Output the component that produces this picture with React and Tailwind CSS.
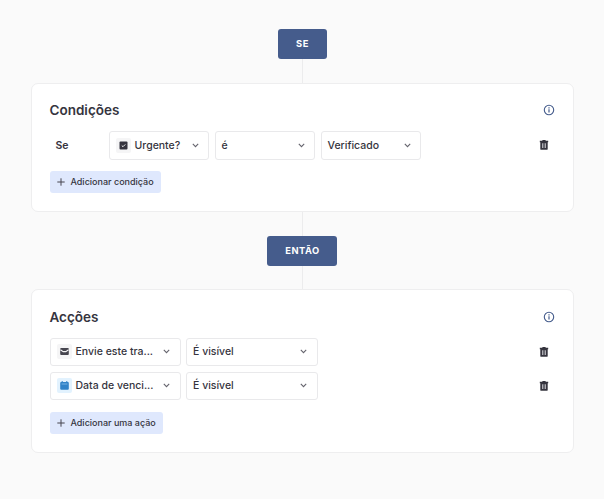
import { clsx } from 'clsx'

const FIELD_ICONS = {
    checkbox: { bg: 'bg-[#f5f5f6]', Glyph: CheckboxGlyph },
    mail: { bg: 'bg-[#f5f5f6]', Glyph: MailGlyph },
    calendar: { bg: 'bg-[#e2f2fe]', Glyph: CalendarGlyph },
}

const ACTIONS = [
    { id: 1, icon: 'mail', field: 'Envie este tra...', state: 'É visível' },
    { id: 2, icon: 'calendar', field: 'Data de venci...', state: 'É visível' },
]

function CheckboxGlyph() {
    return (
        <svg width="9" height="9" viewBox="0 0 9 9" fill="none">
            <rect x="0.5" y="0.5" width="8" height="8" rx="1" fill="#35343e" />
            <path d="M2.8 4.6L4 5.7L6.3 3.4" stroke="#fff" strokeWidth="0.9" />
        </svg>
    )
}

function MailGlyph() {
    return (
        <svg width="9" height="9" viewBox="0 0 9 9" fill="none">
            <rect x="0.2" y="1" width="8.6" height="7" rx="0.9" fill="#46454f" />
            <path d="M0.4 2.7L3.2 4.6H5.8L8.6 2.7" stroke="#f5f5f6" strokeWidth="1.1" />
        </svg>
    )
}

function CalendarGlyph() {
    return (
        <svg width="9" height="9" viewBox="0 0 9 9" fill="none">
            <path d="M2.2 0V2M6.8 0V2" stroke="#3183c8" strokeWidth="1" />
            <rect x="0.2" y="0.9" width="8.6" height="7.8" rx="1" fill="#3183c8" />
            <path d="M1.6 3H7.4" stroke="#8cc0e8" strokeWidth="0.8" />
        </svg>
    )
}

function Chevron() {
    return (
        <svg className="shrink-0" width="7" height="5" viewBox="0 0 7 5" fill="none">
            <path d="M0.8 0.9L3.5 3.6L6.2 0.9" stroke="#65646d" strokeWidth="1.1" />
        </svg>
    )
}

function Info() {
    return (
        <svg width="12" height="12" viewBox="0 0 12 12" fill="none" stroke="#455c8c">
            <circle cx="6" cy="6" r="4.7" strokeWidth="1.1" />
            <path d="M6 5.2V8.6M6 3.3V4.5" strokeWidth="1.2" />
        </svg>
    )
}

function Trash() {
    return (
        <svg width="10" height="10" viewBox="0 0 10 10" fill="none">
            <path d="M3.4 0H6.6V0.7H9.2V2.2H0.8V0.7H3.4Z" fill="#35343e" />
            <path d="M1.3 1.5H8.7V8.9Q8.7 9.8 7.8 9.8H2.2Q1.3 9.8 1.3 8.9Z" fill="#35343e" />
            <path d="M3.7 3.2V8.1M6.3 3.2V8.1" stroke="#c4c4c8" strokeWidth="1.1" />
            <path d="M5 3.2V8.1" stroke="#77767e" strokeWidth="1" />
        </svg>
    )
}

function Select({ icon, label, className }) {
    const field = FIELD_ICONS[icon]
    return (
        <button className={clsx('flex h-[28.5px] items-center rounded-[3px] border border-[#e9e9eb] bg-white pl-[6px] pr-[9.5px]', className)}>
            {field && (
                <span className={clsx('mr-[4px] flex size-[15px] shrink-0 items-center justify-center rounded-[2px]', field.bg)}>
                    <field.Glyph />
                </span>
            )}
            <span className="flex-1 whitespace-nowrap pt-px text-left">{label}</span>
            <Chevron />
        </button>
    )
}

function AddButton({ children, className }) {
    return (
        <button className={clsx('flex h-[22.5px] items-center gap-[6px] rounded-[3px] bg-[#dfe8fd] pl-[7px] text-[9px] font-medium', className)}>
            <svg width="8" height="8" viewBox="0 0 8 8" stroke="#46454f" strokeWidth="1">
                <path d="M4 0.3V7.7M0.3 4H7.7" />
            </svg>
            <span className="whitespace-nowrap">{children}</span>
        </button>
    )
}

function Step({ children, className }) {
    return (
        <div className={clsx('flex h-[30px] items-center justify-center rounded-[3px] bg-[#455c8c] pl-px text-[9.3px] font-bold tracking-[0.55px] text-white', className)}>
            {children}
        </div>
    )
}

function Connector({ className }) {
    return <div className={clsx('w-px bg-[#ececed]', className)} />
}

function Card({ title, className, children }) {
    return (
        <section className={clsx('w-[543px] rounded-[7px] border border-[#eeeeef] bg-white px-[18px]', className)}>
            <div className="flex h-5 items-center justify-between">
                <h2 className="text-[13.5px] font-semibold">{title}</h2>
                <Info />
            </div>
            {children}
        </section>
    )
}

export default function App() {
    return (
        <main className="flex h-[499px] w-[604px] flex-col items-center bg-[#fafafa] pt-[29px] font-['Inter',sans-serif] text-[10.5px] font-medium text-[#35343e]">
            <Step className="w-[49px]">SE</Step>
            <Connector className="h-6" />

            {/* Conditions */}
            <Card title="Condições" className="h-[129px] pt-4">
                <div className="mt-[11px] flex items-center gap-[5.5px]">
                    <span className="w-[53.5px] pl-[6px] pt-px font-semibold">Se</span>
                    <Select icon="checkbox" label="Urgente?" className="w-[100.5px]" />
                    <Select label="é" className="w-[100.5px]" />
                    <Select label="Verificado" className="w-[100.5px]" />
                    <span className="ml-auto mr-[6px]"><Trash /></span>
                </div>
                <AddButton className="mt-[11px] w-[111px]">Adicionar condição</AddButton>
            </Card>

            <Connector className="h-6" />
            <Step className="w-[70px]">ENTÃO</Step>
            <Connector className="h-[23px]" />

            {/* Actions */}
            <Card title="Acções" className="h-[164px] pt-[17px]">
                <div className="mt-[10.5px] flex flex-col gap-[5.5px]">
                    {ACTIONS.map(a => (
                        <div key={a.id} className="flex items-center gap-[5.5px]">
                            <Select icon={a.icon} label={a.field} className="w-[131px]" />
                            <Select label={a.state} className="w-[131.5px]" />
                            <span className="ml-auto mr-[6px]"><Trash /></span>
                        </div>
                    ))}
                </div>
                <AddButton className="mt-[11.5px] w-[113px]">Adicionar uma ação</AddButton>
            </Card>
        </main>
    )
}
